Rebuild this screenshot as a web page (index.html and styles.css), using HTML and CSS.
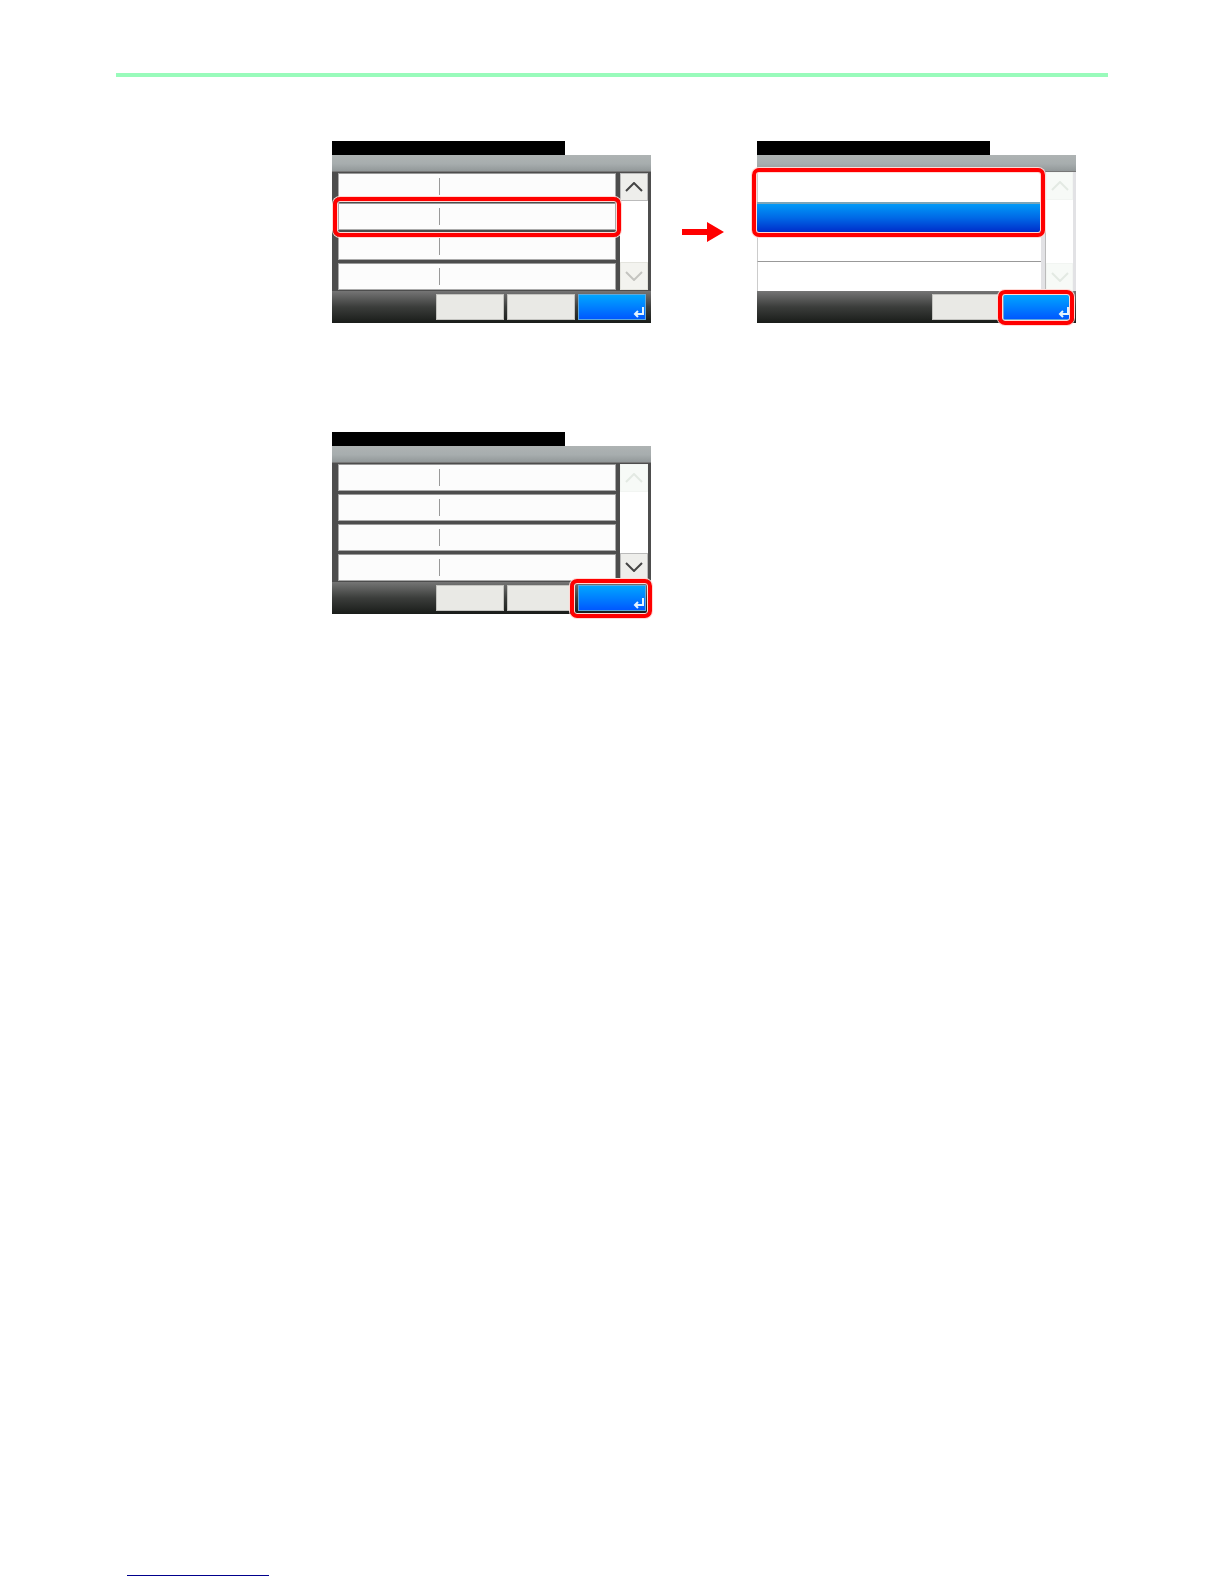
FILE: index.html
```html
<!DOCTYPE html>
<html lang="en">
<head>
  <meta charset="UTF-8" />
  <meta name="viewport" content="width=device-width, initial-scale=1.0" />
  <title>Operation Panel</title>
  <link rel="stylesheet" href="styles.css">
</head>
<body>
  <!-- Shared icons -->
  <svg class="icon-defs" aria-hidden="true">
    <symbol id="icon-up" viewBox="0 0 18 10"><path d="M1 9L9 1l8 8" /></symbol>
    <symbol id="icon-down" viewBox="0 0 18 10"><path d="M1 1l8 8 8-8" /></symbol>
    <symbol id="icon-enter" viewBox="0 0 11 11"><path d="M10 0v7H3M5 4L2 7l3 3" /></symbol>
  </svg>

  <header class="page-header"></header>

  <main class="steps">
    <!-- Menu, second item highlighted -->
    <section class="panel">
      <div class="title-bar"></div>
      <div class="status-bar"></div>
      <div class="panel-body">
        <div class="menu">
          <button class="menu-row" aria-label="Item 1"><span class="divider"></span></button>
          <button class="menu-row marked" aria-label="Item 2"><span class="divider"></span></button>
          <button class="menu-row" aria-label="Item 3"><span class="divider"></span></button>
          <button class="menu-row" aria-label="Item 4"><span class="divider"></span></button>
        </div>
        <div class="scroller">
          <button class="scroll-button" aria-label="Up"><svg class="chevron"><use href="#icon-up" /></svg></button>
          <button class="scroll-button off" aria-label="Down"><svg class="chevron"><use href="#icon-down" /></svg></button>
        </div>
      </div>
      <div class="panel-footer">
        <button class="key first" aria-label="Cancel"></button>
        <button class="key" aria-label="Back"></button>
        <button class="key enter" aria-label="Enter"><svg class="enter-icon"><use href="#icon-enter" /></svg></button>
      </div>
    </section>

    <svg class="arrow" viewBox="0 0 42 20" aria-hidden="true"><path d="M0 7h25V0l17 10-17 10v-7H0z" /></svg>

    <!-- Selection list -->
    <section class="panel">
      <div class="title-bar"></div>
      <div class="status-bar"></div>
      <div class="panel-body light">
        <div class="options">
          <div class="option-group marked">
            <button class="option" aria-label="Option 1"></button>
            <button class="option selected" aria-label="Option 2"></button>
          </div>
          <div class="option-group">
            <button class="option" aria-label="Option 3"></button>
            <button class="option" aria-label="Option 4"></button>
          </div>
        </div>
        <div class="scroller">
          <button class="scroll-button faded" aria-label="Up"><svg class="chevron"><use href="#icon-up" /></svg></button>
          <button class="scroll-button faded" aria-label="Down"><svg class="chevron"><use href="#icon-down" /></svg></button>
        </div>
      </div>
      <div class="panel-footer">
        <button class="key second" aria-label="Cancel"></button>
        <button class="key enter marked" aria-label="Enter"><svg class="enter-icon"><use href="#icon-enter" /></svg></button>
      </div>
    </section>

    <!-- Menu, confirm -->
    <section class="panel">
      <div class="title-bar"></div>
      <div class="status-bar"></div>
      <div class="panel-body">
        <div class="menu">
          <button class="menu-row" aria-label="Item 1"><span class="divider"></span></button>
          <button class="menu-row" aria-label="Item 2"><span class="divider"></span></button>
          <button class="menu-row" aria-label="Item 3"><span class="divider"></span></button>
          <button class="menu-row" aria-label="Item 4"><span class="divider"></span></button>
        </div>
        <div class="scroller">
          <button class="scroll-button faded" aria-label="Up"><svg class="chevron"><use href="#icon-up" /></svg></button>
          <button class="scroll-button" aria-label="Down"><svg class="chevron"><use href="#icon-down" /></svg></button>
        </div>
      </div>
      <div class="panel-footer">
        <button class="key first" aria-label="Cancel"></button>
        <button class="key" aria-label="Back"></button>
        <button class="key enter marked wide" aria-label="Enter"><svg class="enter-icon"><use href="#icon-enter" /></svg></button>
      </div>
    </section>
  </main>

  <footer class="page-footer">
    <a class="footer-link" href="#" aria-label="Top of page"></a>
  </footer>
</body>
</html>
```
FILE: styles.css
```css
* {
  box-sizing: border-box;
}
body {
  margin: 0;
  min-height: 100vh;
  padding: 73px 116px 8px;
  display: flex;
  flex-direction: column;
  background-color: #fff;
  font-family: "Liberation Sans", sans-serif;
}
button {
  margin: 0;
  padding: 0;
  border: none;
  border-radius: 0;
  cursor: pointer;
}
.icon-defs {
  display: none;
}
.page-header {
  height: 4px;
  background-color: #99fbbb;
}
.steps {
  display: grid;
  grid-template-columns: 1fr 106px 1fr;
  row-gap: 109px;
  padding: 64px 32px 0 216px;
}
.arrow {
  width: 42px;
  height: 20px;
  align-self: center;
  margin-left: 31px;
  fill: #f00;
}

/* Device screen */
.title-bar {
  width: 73%;
  height: 14px;
  background-color: #000;
}
.status-bar {
  height: 17px;
  background: linear-gradient(#aeb3b3, #a7adae 55%, #929899);
  border-bottom: 1px solid #777;
}
.panel-body {
  display: flex;
  gap: 4px;
  height: 119px;
  padding: 1px 3px 1px 6px;
  background-color: #4d4d4d;
}
.menu {
  flex: 1;
  display: grid;
  grid-template-rows: repeat(4, 1fr);
  gap: 3px;
}
.menu-row {
  position: relative;
  display: flex;
  align-items: center;
  padding-left: 36%;
  background-color: #fcfcfc;
  border: 1px solid #aaa;
  border-top-color: #999;
}
.divider {
  width: 1px;
  height: 17px;
  background-color: #999;
}
.scroller {
  width: 28px;
  display: flex;
  flex-direction: column;
  justify-content: space-between;
  background-color: #fff;
}
.scroll-button {
  height: 28px;
  display: flex;
  align-items: center;
  justify-content: center;
  background-color: #eeeeeb;
  border: 1px solid #bbb;
  color: #444;
}
.scroll-button.off {
  background-color: #f3f3ef;
  border-color: #e4e4de;
  color: #c4c4c0;
}
.scroll-button.faded {
  background-color: #f7faf7;
  border-color: #f2f5f2;
  color: #e3e9e3;
}
.chevron {
  width: 18px;
  height: 10px;
  fill: none;
  stroke: currentColor;
  stroke-width: 2;
}

/* Selection list */
.panel-body.light {
  padding: 0 3px 0 0;
  background-color: #e2e2e5;
}
.options {
  flex: 1;
  display: grid;
  grid-template-rows: 1fr 1fr;
}
.option-group {
  position: relative;
  display: grid;
  grid-template-rows: 1fr 1fr;
}
.option {
  background-color: #fff;
  border-left: 1px solid #ccc;
}
.option + .option {
  border-top: 1px solid #999;
}
.option.selected {
  background: linear-gradient(#009af8, #0068e6 50%, #002dca);
  border-left: none;
  border-top: 2px solid #7ba5b9;
}
.light .scroller {
  border-left: 1px solid #bbb;
}

/* Bottom keys */
.panel-footer {
  display: grid;
  grid-template-columns: repeat(3, 68px);
  justify-content: end;
  gap: 3px;
  height: 32px;
  padding: 3px 5px 3px 0;
  background: linear-gradient(#757575, #3b3d3b 50%, #191c19);
}
.key {
  position: relative;
  background-color: #e9e9e5;
  border: 1px solid #c4c4c0;
}
.key.second {
  grid-column: 2;
}
.key.enter {
  display: flex;
  align-items: flex-end;
  justify-content: flex-end;
  padding: 0 1px 1px 0;
  background: linear-gradient(#00a6ff, #0080ff 50%, #0058ff);
  border-color: #5fa9dc;
}
.enter-icon {
  width: 11px;
  height: 11px;
  fill: none;
  stroke: #e4f3ff;
  stroke-width: 2;
}

/* Red call-out frames */
.marked::after {
  content: "";
  position: absolute;
  z-index: 1;
  inset: -7px -6px -8px;
  border: 4px solid #f00;
  border-radius: 7px;
  box-shadow: 0 0 0 1px #ffd9d5, inset 0 0 0 1px #ffd9d5;
  pointer-events: none;
}
.option-group.marked::after {
  inset: -4px -4px -5px -5px;
}
.key.marked::after {
  inset: -5px -4px -6px -6px;
}
.key.wide::after {
  inset: -7px -7px -8px -9px;
}

.page-footer {
  display: flex;
  margin-top: auto;
  padding-left: 11px;
}
.footer-link {
  width: 142px;
  border-bottom: 1px solid #00008c;
}
```
